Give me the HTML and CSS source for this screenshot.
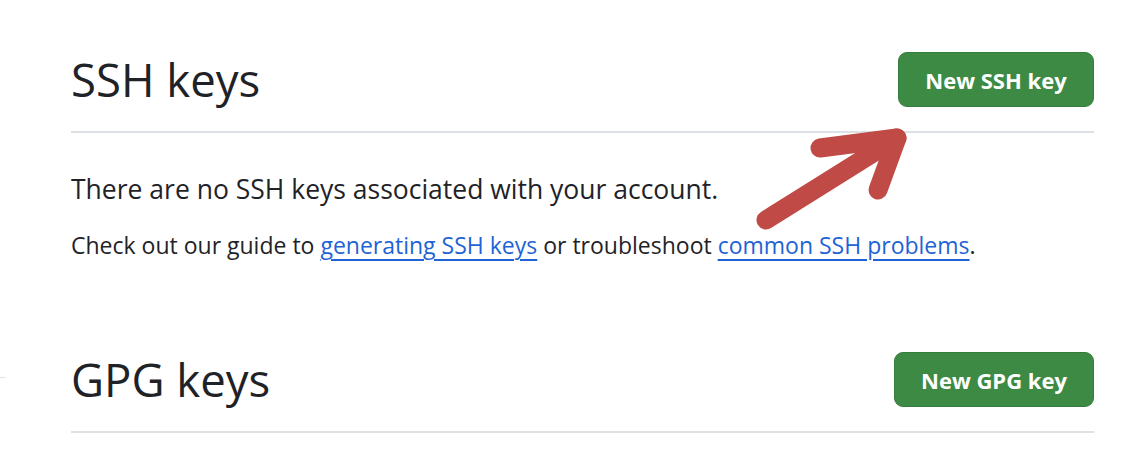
FILE: index.html
```html
<!DOCTYPE html>
<html lang="en">
<head>
<meta charset="utf-8">
<title>SSH and GPG keys</title>
<link rel="stylesheet" href="styles.css">
</head>
<body>
<div class="page">
  <span class="edge-stub"></span>
  <section class="keys keys-ssh">
    <div class="subhead">
      <h2 class="subhead-title">SSH keys</h2>
      <a class="btn-primary" href="#">New SSH key</a>
    </div>
    <p class="blank-lead">There are no SSH keys associated with your account.</p>
    <p class="blank-note">Check out our guide to <a href="#">generating SSH keys</a> or troubleshoot <a href="#">common SSH problems</a>.</p>
  </section>
  <section class="keys keys-gpg">
    <div class="subhead">
      <h2 class="subhead-title">GPG keys</h2>
      <a class="btn-primary btn-wide" href="#">New GPG key</a>
    </div>
  </section>
  <svg class="arrow" width="160" height="110" viewBox="0 0 160 110" aria-hidden="true">
    <g fill="none" stroke="#c04a45" stroke-width="19" stroke-linecap="round" stroke-linejoin="round">
      <path d="M16 100 L147 18"/>
      <path d="M70 28 L147 18 L128 70"/>
    </g>
  </svg>
</div>
</body>
</html>
```
FILE: styles.css
```css
* { box-sizing: border-box; }
html, body { margin: 0; padding: 0; background: #ffffff; }
body {
  font-family: "Open Sans", "Noto Sans", sans-serif;
  color: #1f2328;
}
.page {
  position: relative;
  width: 1130px;
  height: 466px;
  padding: 52px 36px 0 71px;
  overflow: hidden;
}
.subhead {
  display: flex;
  align-items: center;
  justify-content: space-between;
  padding-bottom: 24px;
  border-bottom: 2px solid #dde1e6;
}
.subhead-title {
  margin: 0;
  font-size: 45.5px;
  font-weight: 400;
  line-height: 55px;
}
.btn-primary {
  display: inline-flex;
  align-items: center;
  justify-content: center;
  width: 196px;
  height: 55px;
  border-radius: 9px;
  background: #3d8a45;
  border: 1px solid #367d3d;
  color: #ffffff;
  font-size: 22px;
  font-weight: 700;
  text-decoration: none;
}
.btn-wide { width: 200px; }
.blank-lead {
  margin: 40px 0 0;
  font-size: 26.5px;
  line-height: 32px;
}
.blank-note {
  margin: 25px 0 0;
  font-size: 23px;
  line-height: 30px;
}
.blank-note a {
  color: #1f63d6;
  text-decoration: underline;
  text-underline-offset: 5px;
  text-decoration-thickness: 2px;
}
.keys-gpg { margin-top: 92px; }
.arrow {
  position: absolute;
  left: 750px;
  top: 120px;
}
.edge-stub {
  position: absolute;
  left: 0;
  top: 377px;
  width: 6px;
  height: 1px;
  background: #e2e4e8;
}
```
